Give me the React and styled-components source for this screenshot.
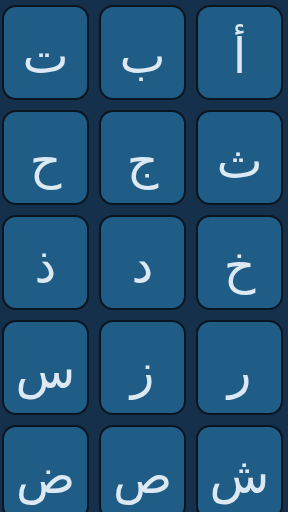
import styled, { createGlobalStyle } from "styled-components";

const letters = ["أ", "ب", "ت", "ث", "ج", "ح", "خ", "د", "ذ", "ر", "ز", "س", "ش", "ص", "ض"];

const Global = createGlobalStyle`
  html, body {
    margin: 0;
    padding: 0;
    background: #15304a;
    overflow: hidden;
  }
`;

const App = () => {
  return (
    <Page>
      <Global />
      <Grid>
        {letters.map((l) => (
          <Tile key={l}>{l}</Tile>
        ))}
      </Grid>
    </Page>
  );
};

export default App;

const Page = styled.div`
  width: 288px;
  height: 512px;
  overflow: hidden;
  background: #15304a;
  box-sizing: border-box;
  padding: 5px 5px 0 4px;
`;

const Grid = styled.div`
  direction: rtl;
  display: grid;
  grid-template-columns: repeat(3, 87px);
  grid-auto-rows: 95px;
  column-gap: 10px;
  row-gap: 10px;
`;

const Tile = styled.div`
  box-sizing: border-box;
  border: 2px solid #0b1520;
  border-radius: 14px;
  background: #1f5c86;
  color: #dce9f3;
  font-family: "DejaVu Sans", sans-serif;
  font-size: 49px;
  display: flex;
  align-items: center;
  justify-content: center;
  padding-top: 8px;
`;
